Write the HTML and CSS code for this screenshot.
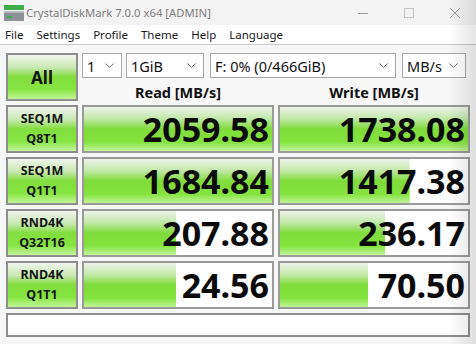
FILE: index.html
```html
<!DOCTYPE html>
<html lang="en">
  <head>
    <meta charset="UTF-8" />
    <title>CrystalDiskMark 7.0.0 x64 [ADMIN]</title>
    <link rel="stylesheet" href="styles.css">
  </head>
  <body>
    <div class="window">
      <div class="titlebar">
        <svg class="app-icon" width="20" height="16" viewBox="0 0 20 16">
          <rect x="0" y="0" width="20" height="5" fill="#3fae49" />
          <rect x="0" y="6" width="20" height="10" fill="#8c9198" />
          <rect x="0" y="6" width="20" height="2" fill="#b5b9be" />
          <rect x="3" y="11" width="5" height="2" fill="#3fae49" />
        </svg>
        <span class="title">CrystalDiskMark 7.0.0 x64 [ADMIN]</span>
        <div class="controls">
          <svg width="12" height="12" viewBox="0 0 12 12"><path d="M1 6.5h10" stroke="#9a9a9a" stroke-width="1" /></svg>
          <svg width="12" height="12" viewBox="0 0 12 12"><rect x="1.5" y="1.5" width="9" height="9" fill="none" stroke="#c4c4c4" stroke-width="1" /></svg>
          <svg width="12" height="12" viewBox="0 0 12 12"><path d="M1 1l10 10M11 1L1 11" stroke="#9a9a9a" stroke-width="1" /></svg>
        </div>
      </div>
      <div class="menubar">
        <span>File</span>
        <span>Settings</span>
        <span>Profile</span>
        <span>Theme</span>
        <span>Help</span>
        <span>Language</span>
      </div>

      <div class="main">
        <div class="btn all">All</div>
        <div class="top">
          <div class="options">
            <div class="combo w-count"><span>1</span><svg class="chev" width="9" height="5" viewBox="0 0 9 5"><path d="M0.5 0.5l4 4 4-4" fill="none" stroke="#6b6b6b" /></svg></div>
            <div class="combo w-size"><span>1GiB</span><svg class="chev" width="9" height="5" viewBox="0 0 9 5"><path d="M0.5 0.5l4 4 4-4" fill="none" stroke="#6b6b6b" /></svg></div>
            <div class="combo w-drive"><span>F: 0% (0/466GiB)</span><svg class="chev" width="9" height="5" viewBox="0 0 9 5"><path d="M0.5 0.5l4 4 4-4" fill="none" stroke="#6b6b6b" /></svg></div>
            <div class="combo w-unit"><span>MB/s</span><svg class="chev" width="9" height="5" viewBox="0 0 9 5"><path d="M0.5 0.5l4 4 4-4" fill="none" stroke="#6b6b6b" /></svg></div>
          </div>
          <div class="head">Read [MB/s]</div>
          <div class="head">Write [MB/s]</div>
        </div>

        <div class="btn label"><span>SEQ1M</span><span>Q8T1</span></div>
        <div class="value" style="--w: 100%">2059.58</div>
        <div class="value" style="--w: 100%">1738.08</div>

        <div class="btn label"><span>SEQ1M</span><span>Q1T1</span></div>
        <div class="value" style="--w: 100%">1684.84</div>
        <div class="value" style="--w: 69%">1417.38</div>

        <div class="btn label"><span>RND4K</span><span>Q32T16</span></div>
        <div class="value" style="--w: 49%">207.88</div>
        <div class="value" style="--w: 56%">236.17</div>

        <div class="btn label"><span>RND4K</span><span>Q1T1</span></div>
        <div class="value" style="--w: 49%">24.56</div>
        <div class="value" style="--w: 47%">70.50</div>

        <div class="status"></div>
      </div>
      <div class="shade"></div>
    </div>
  </body>
</html>
```

FILE: styles.css
```css
body {
  margin: 0;
  background-color: #f7f7f7;
  font-family: "Noto Sans", "Open Sans", sans-serif;
  color: #111;
}
.window {
  position: relative;
  width: 476px;
  height: 344px;
  overflow: hidden;
}
.titlebar {
  height: 25px;
  background: #f3f3f3;
  display: flex;
  align-items: center;
  padding-left: 4px;
}
.app-icon {
  margin-right: 2px;
}
.title {
  font-size: 11.3px;
  color: #7d7d7d;
}
.controls {
  margin-left: auto;
  display: flex;
  gap: 34px;
  padding-right: 15px;
}
.menubar {
  height: 19px;
  background: #fff;
  border-bottom: 1px solid #c9c9c9;
  display: flex;
  align-items: center;
  gap: 13px;
  padding-left: 5px;
  font-size: 11.5px;
  color: #1a1a1a;
}
.main {
  display: grid;
  grid-template-columns: 72px 192px 192px;
  grid-auto-rows: 48px;
  gap: 4px;
  padding: 8px 6px 0;
}
.btn {
  box-sizing: border-box;
  border: 2px solid #8e8e8e;
  background: linear-gradient(to bottom, #f1f4ee 0%, #c9e9b2 28%, #82dd3e 50%, #86e542 78%, #c4f59c 100%);
  display: flex;
  flex-direction: column;
  align-items: center;
  justify-content: center;
  font-weight: bold;
  color: #141414;
}
.all {
  font-size: 17px;
}
.label {
  font-size: 12.5px;
  line-height: 20px;
}
.top {
  grid-column: 2 / 4;
  display: grid;
  grid-template-columns: 192px 192px;
  grid-template-rows: 25px 23px;
  column-gap: 4px;
}
.options {
  grid-column: 1 / 3;
  display: flex;
  gap: 4px;
}
.combo {
  box-sizing: border-box;
  height: 25px;
  background: #fff;
  border: 1px solid #a6a6a6;
  display: flex;
  align-items: center;
  justify-content: space-between;
  padding: 0 7px 0 4px;
  font-size: 14.5px;
  color: #111;
}
.w-count { width: 40px; }
.w-size { width: 78px; margin-right: 2px; }
.w-drive { width: 186px; margin-right: 2px; }
.w-unit { width: 64px; }
.head {
  text-align: center;
  font-weight: bold;
  font-size: 14.5px;
  line-height: 22px;
  padding-top: 3px;
}
.value {
  box-sizing: border-box;
  border: 2px solid #9a9a9a;
  background:
    linear-gradient(to bottom, #eef3ea 0%, #c3e8a9 26%, #7fdc3a 50%, #84e33f 80%, #c2f39a 100%) no-repeat 0 0 / var(--w) 100%,
    #fff;
  text-align: right;
  font-weight: bold;
  font-size: 34px;
  line-height: 44px;
  padding-right: 3px;
  color: #0a0a0a;
}
.status {
  grid-column: 1 / 4;
  height: 24px;
  box-sizing: border-box;
  border: 2px solid #8e8e8e;
  background: #fff;
}
.shade {
  position: absolute;
  top: 0;
  right: 0;
  width: 28px;
  height: 100%;
  background: linear-gradient(to right, rgba(0, 0, 0, 0), rgba(0, 0, 0, 0.1));
  pointer-events: none;
}
```
